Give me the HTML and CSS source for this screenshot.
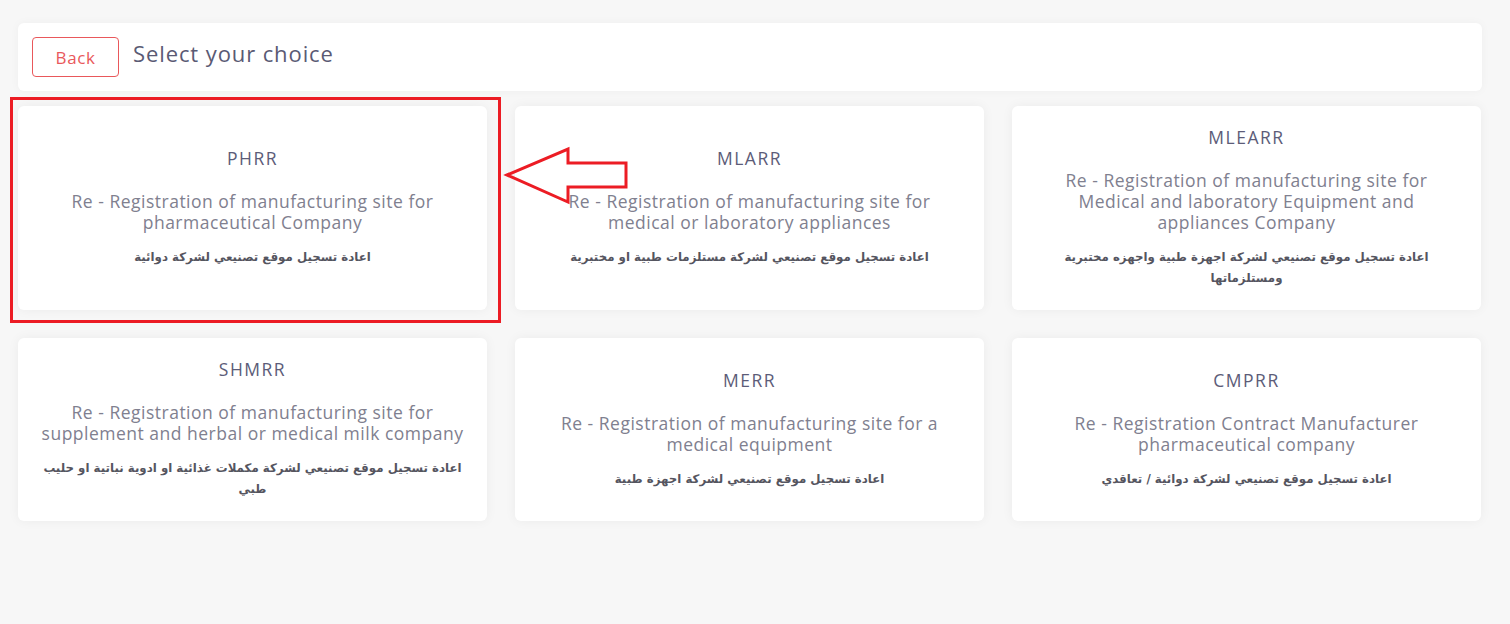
FILE: index.html
```html
<!DOCTYPE html>
<html lang="en">
<head>
<meta charset="utf-8">
<title>Select your choice</title>
<link rel="stylesheet" href="styles.css">
</head>
<body>
<div class="page">
  <div class="header">
    <button class="back">Back</button>
    <h1 class="heading">Select your choice</h1>
  </div>
  <div class="grid">
    <div class="card">
      <div class="code">PHRR</div>
      <div class="desc">Re - Registration of manufacturing site for<br>pharmaceutical Company</div>
      <div class="ar" dir="rtl">اعادة تسجيل موقع تصنيعي لشركة دوائية</div>
    </div>
    <div class="card">
      <div class="code">MLARR</div>
      <div class="desc">Re - Registration of manufacturing site for<br>medical or laboratory appliances</div>
      <div class="ar" dir="rtl">اعادة تسجيل موقع تصنيعي لشركة مستلزمات طبية او مختبرية</div>
    </div>
    <div class="card">
      <div class="code">MLEARR</div>
      <div class="desc">Re - Registration of manufacturing site for<br>Medical and laboratory Equipment and<br>appliances Company</div>
      <div class="ar" dir="rtl">اعادة تسجيل موقع تصنيعي لشركة اجهزة طبية واجهزه مختبرية<br>ومستلزماتها</div>
    </div>
    <div class="card">
      <div class="code">SHMRR</div>
      <div class="desc">Re - Registration of manufacturing site for<br>supplement and herbal or medical milk company</div>
      <div class="ar" dir="rtl">اعادة تسجيل موقع تصنيعي لشركة مكملات غذائية او ادوية نباتية او حليب<br>طبي</div>
    </div>
    <div class="card">
      <div class="code">MERR</div>
      <div class="desc">Re - Registration of manufacturing site for a<br>medical equipment</div>
      <div class="ar" dir="rtl">اعادة تسجيل موقع تصنيعي لشركة اجهزة طبية</div>
    </div>
    <div class="card">
      <div class="code">CMPRR</div>
      <div class="desc">Re - Registration Contract Manufacturer<br>pharmaceutical company</div>
      <div class="ar" dir="rtl">اعادة تسجيل موقع تصنيعي لشركة دوائية / تعاقدي</div>
    </div>
  </div>
  <div class="highlight"></div>
  <svg class="arrow" width="130" height="64" viewBox="0 0 130 64">
    <polygon points="4,30 65,4 65,18 123,18 123,42 65,42 65,57" fill="none" stroke="#ec1c24" stroke-width="3" stroke-linejoin="miter"/>
  </svg>
</div>
</body>
</html>
```
FILE: styles.css
```css
html, body {
  margin: 0;
  padding: 0;
}
body {
  background: #f7f7f7;
  font-family: "Open Sans", "Liberation Sans", sans-serif;
  width: 1510px;
  height: 624px;
  overflow: hidden;
}
.page {
  position: relative;
  padding: 23px 28px 0 18px;
}
.header {
  background: #fff;
  border-radius: 6px;
  height: 68px;
  box-sizing: border-box;
  padding: 14px;
  display: flex;
  align-items: flex-start;
  gap: 14px;
  box-shadow: 0 0 10px rgba(0, 0, 0, 0.04);
}
.back {
  width: 87px;
  height: 40px;
  border: 1px solid #e9585b;
  border-radius: 4px;
  background: #fff;
  color: #e9585b;
  font-family: inherit;
  font-size: 17px;
  letter-spacing: 0.6px;
  padding: 0;
  margin: 0;
}
.heading {
  margin: 0;
  font-size: 22px;
  letter-spacing: 0.9px;
  font-weight: 400;
  color: #5a5a74;
  line-height: 32px;
}
.grid {
  margin-top: 15px;
  display: grid;
  grid-template-columns: repeat(3, 469px);
  column-gap: 28px;
  row-gap: 28px;
}
.card {
  background: #fff;
  border-radius: 6px;
  box-shadow: 0 0 12px rgba(0, 0, 0, 0.05);
  padding: 19px 20px 21px;
  display: flex;
  flex-direction: column;
  justify-content: center;
  align-items: center;
  text-align: center;
  white-space: nowrap;
}
.code {
  font-size: 17.5px;
  letter-spacing: 1.5px;
  line-height: 24px;
  color: #5c5c78;
}
.desc {
  margin-top: 21px;
  font-size: 17.5px;
  letter-spacing: 0.5px;
  line-height: 21px;
  color: #80808f;
}
.ar {
  margin-top: 14px;
  font-family: "DejaVu Sans", sans-serif;
  font-weight: 700;
  font-size: 11.8px;
  line-height: 21px;
  color: #55555f;
}
.highlight {
  position: absolute;
  left: 10px;
  top: 97px;
  width: 485px;
  height: 220px;
  border: 3px solid #ec1c24;
}
.arrow {
  position: absolute;
  left: 503px;
  top: 145px;
}
```
